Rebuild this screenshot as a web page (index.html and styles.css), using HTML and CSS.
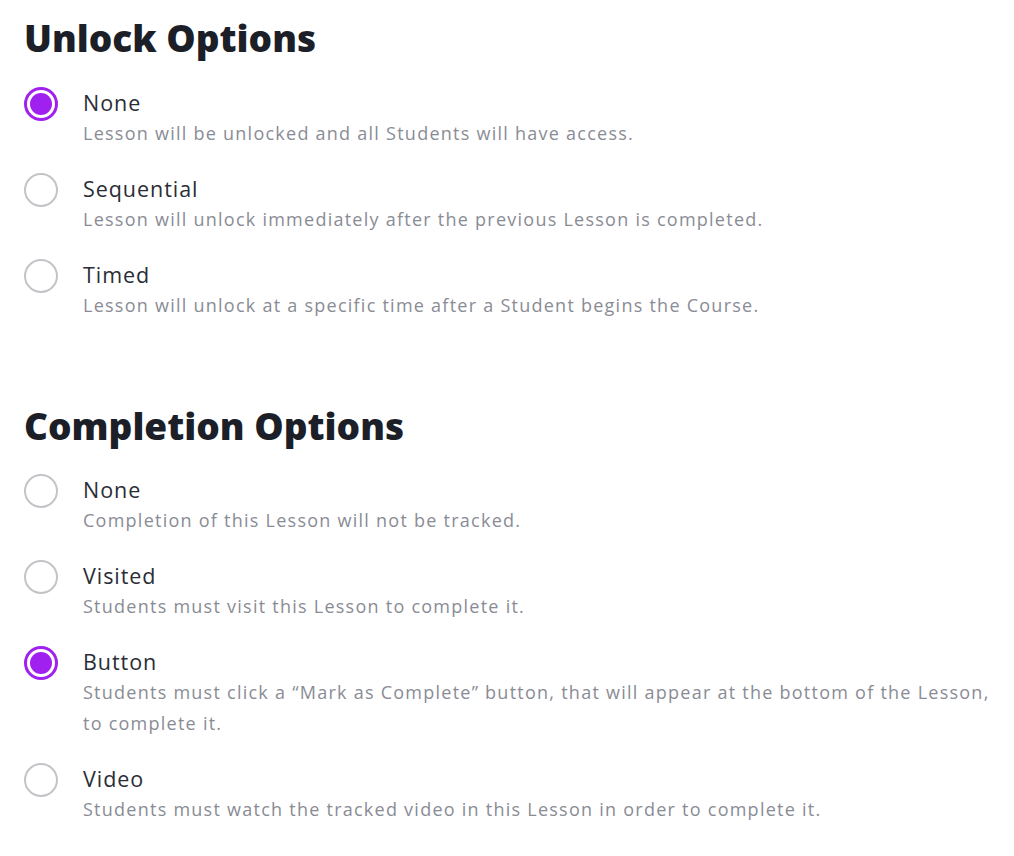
FILE: index.html
```html
<!DOCTYPE html>
<html>
<head>
<meta charset="utf-8">
<link rel="stylesheet" href="styles.css">
</head>
<body>
<main class="page">
  <section class="group">
    <h2 class="title">Unlock Options</h2>
    <div class="options">
      <div class="option">
        <span class="radio checked"></span>
        <div class="text">
          <div class="label">None</div>
          <div class="desc">Lesson will be unlocked and all Students will have access.</div>
        </div>
      </div>
      <div class="option">
        <span class="radio"></span>
        <div class="text">
          <div class="label">Sequential</div>
          <div class="desc">Lesson will unlock immediately after the previous Lesson is completed.</div>
        </div>
      </div>
      <div class="option">
        <span class="radio"></span>
        <div class="text">
          <div class="label">Timed</div>
          <div class="desc">Lesson will unlock at a specific time after a Student begins the Course.</div>
        </div>
      </div>
    </div>
  </section>
  <section class="group second">
    <h2 class="title">Completion Options</h2>
    <div class="options">
      <div class="option">
        <span class="radio"></span>
        <div class="text">
          <div class="label">None</div>
          <div class="desc">Completion of this Lesson will not be tracked.</div>
        </div>
      </div>
      <div class="option">
        <span class="radio"></span>
        <div class="text">
          <div class="label">Visited</div>
          <div class="desc">Students must visit this Lesson to complete it.</div>
        </div>
      </div>
      <div class="option">
        <span class="radio checked"></span>
        <div class="text">
          <div class="label">Button</div>
          <div class="desc">Students must click a “Mark as Complete” button, that will appear at the bottom of the Lesson, to complete it.</div>
        </div>
      </div>
      <div class="option">
        <span class="radio"></span>
        <div class="text">
          <div class="label">Video</div>
          <div class="desc">Students must watch the tracked video in this Lesson in order to complete it.</div>
        </div>
      </div>
    </div>
  </section>
</main>
</body>
</html>
```
FILE: styles.css
```css
html, body {
  margin: 0;
  padding: 0;
  background: #ffffff;
}
body {
  font-family: "Open Sans", "Noto Sans", sans-serif;
  color: #2a2d36;
}
.page {
  padding: 13px 24px 0 24px;
  width: 966px;
}
.title {
  margin: 0;
  font-size: 37px;
  line-height: 50px;
  font-weight: 800;
  color: #1c1f28;
}
.second {
  margin-top: 80px;
}
.options {
  margin-top: 24px;
  display: flex;
  flex-direction: column;
  gap: 24px;
}
.second .options {
  margin-top: 23px;
}
.option {
  display: flex;
  align-items: flex-start;
  gap: 25px;
}
.radio {
  flex: none;
  box-sizing: border-box;
  width: 34px;
  height: 34px;
  border: 2px solid #c4c4c8;
  border-radius: 50%;
  position: relative;
}
.radio.checked {
  border: 3px solid #a020f0;
}
.radio.checked::after {
  content: "";
  position: absolute;
  left: 3px;
  top: 3px;
  width: 22px;
  height: 22px;
  border-radius: 50%;
  background: #a020f0;
}
.text {
  flex: 1;
  min-width: 0;
}
.label {
  font-size: 21.5px;
  line-height: 31px;
  letter-spacing: 0.95px;
  color: #2a2d36;
}
.desc {
  font-size: 18px;
  line-height: 31px;
  letter-spacing: 1.25px;
  color: #8a8c95;
}
```
